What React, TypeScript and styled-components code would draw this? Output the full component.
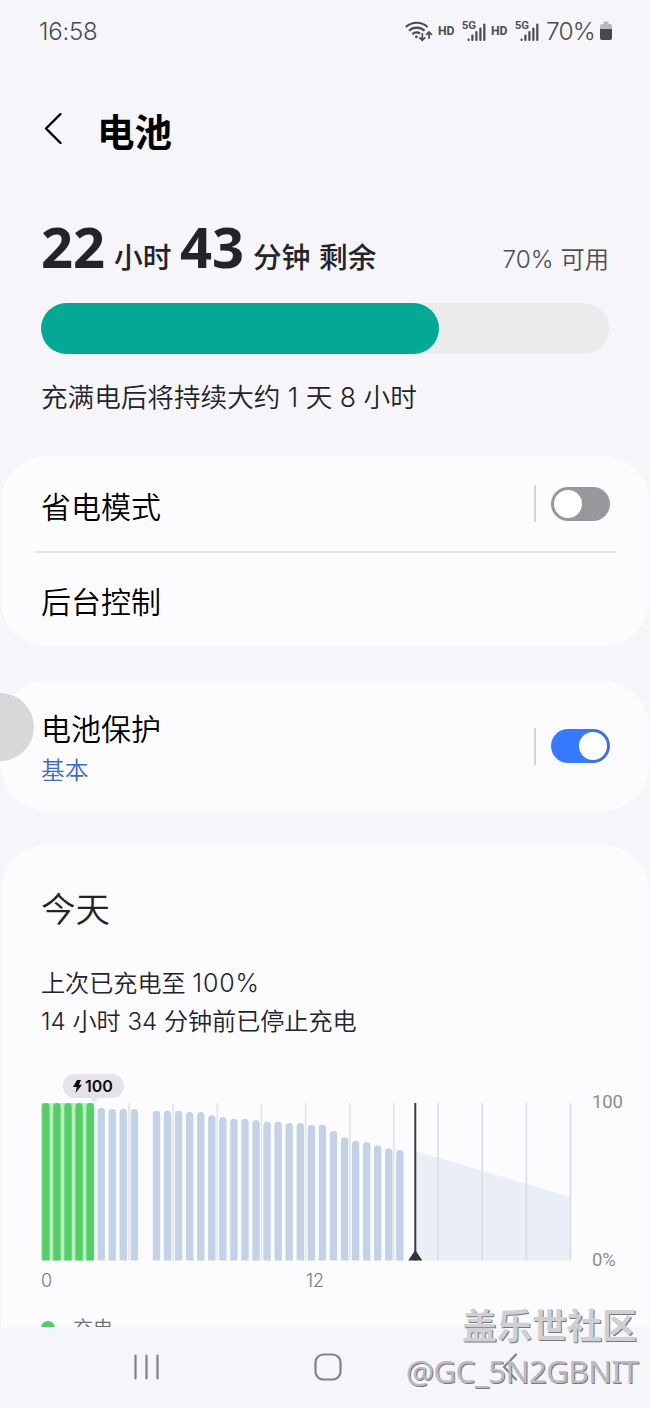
import React from "react";
import styled, { createGlobalStyle } from "styled-components";

const GlobalStyle = createGlobalStyle`
  *, *::before, *::after { box-sizing: border-box; }
  body {
    margin: 0;
    background: #f6f6fa;
    color: #000;
    font-family: Inter, "Noto Sans CJK SC", sans-serif;
  }
`;

const Screen = styled.div`
  position: relative;
  display: flex;
  flex-direction: column;
  width: 650px;
  height: 1408px;
  overflow: hidden;
  background: #f6f6fa;
  white-space: nowrap;
`;

const StatusBar = styled.header`
  display: flex;
  align-items: center;
  height: 62px;
  flex: none;
  padding: 0 37px 0 38px;
  color: #4b4b4f;
`;

const Clock = styled.span`
  padding: 1px 0 0 1px;
  font-size: 24px;
  font-weight: 350;
  line-height: 30px;
  letter-spacing: -0.2px;
  margin-right: auto;
`;

const StatusIcons = styled.div`
  display: flex;
  align-items: center;
`;

const HdLabel = styled.span`
  width: 17px;
  margin: 0 7px 0 5px;
  font: 700 12.2px/14px Roboto, sans-serif;
`;

const Percent = styled.span`
  width: 50px;
  margin: 0 3px 0 7px;
  font-size: 24.5px;
  font-weight: 350;
  line-height: 30px;
  letter-spacing: -0.9px;
`;

const Header = styled.div`
  display: flex;
  align-items: center;
  height: 136px;
  flex: none;
  padding-left: 44px;
  gap: 34px;
`;

const Title = styled.h1`
  margin: 0;
  font: 700 37.5px/44px "Noto Sans CJK SC", sans-serif;
`;

const Summary = styled.section`
  padding: 20px 41px 0;
  height: 258px;
  flex: none;
  color: #232329;
`;

const RemainingRow = styled.div`
  display: flex;
  align-items: baseline;
  height: 56px;
  line-height: 56px;
`;

const BigNumber = styled.span<{ $width: number }>`
  width: ${(p) => p.$width}px;
  font-family: "Noto Sans", sans-serif;
  font-weight: 700;
  font-size: 56px;
`;

const Unit = styled.span<{ $width: number }>`
  width: ${(p) => p.$width}px;
  font-family: "Noto Sans CJK SC", sans-serif;
  font-weight: 500;
  font-size: 28.7px;
`;

const Available = styled.span`
  margin-left: auto;
  font-size: 24.3px;
  font-weight: 350;
  color: #4d4d52;
`;

const Track = styled.div`
  height: 51px;
  margin-top: 29px;
  border-radius: 26px;
  background: #ebebee;
`;

const Fill = styled.div`
  width: 70%;
  height: 100%;
  border-radius: 26px;
  background: #03a994;
`;

const Estimate = styled.p`
  margin: 23px 0 0;
  font-size: 26.6px;
  font-weight: 350;
  line-height: 40px;
`;

const Card = styled.section<{ $height: number; $gap?: number }>`
  height: ${(p) => p.$height}px;
  margin: ${(p) => p.$gap ?? 0}px 1px 0;
  flex: none;
  border-radius: 46px;
  background: #fcfcff;
`;

const SettingRow = styled.div<{ $height: number }>`
  display: flex;
  align-items: center;
  height: ${(p) => p.$height}px;
  padding: 0 39px 0 40px;
`;

const Divider = styled.hr`
  height: 2px;
  margin: 0 33px;
  border: 0;
  background: #e4e4e9;
`;

const Labels = styled.div`
  margin-right: auto;
  padding-top: 2px;
  font-family: "Noto Sans CJK SC", sans-serif;
  font-weight: 350;
`;

const Name = styled.div`
  font-size: 30px;
  line-height: 44px;
`;

const Sub = styled.div`
  font-size: 23.8px;
  line-height: 40px;
  color: #3d6dbd;
`;

const Switch = styled.div<{ $on?: boolean }>`
  display: flex;
  justify-content: ${(p) => (p.$on ? "flex-end" : "flex-start")};
  width: 59px;
  height: 34px;
  padding: 3px;
  border-radius: 17px;
  background: ${(p) => (p.$on ? "linear-gradient(90deg, #387aff 60%, #416fd0 85%)" : "#98979c")};

  &::after {
    content: "";
    width: 28px;
    height: 28px;
    border-radius: 50%;
    background: #fff;
  }
`;

const Separator = styled.div`
  width: 2px;
  height: 37px;
  margin-right: 15px;
  background: #d5d5d9;
`;

const UsageCard = styled.section`
  flex: 1;
  min-height: 0;
  overflow: hidden;
  margin: 34px 1px 0;
  padding: 38px 0 0 40px;
  border-radius: 46px 46px 0 0;
  background: #fcfcff;
  color: #232329;
`;

const Today = styled.h2`
  margin: 0 0 34px;
  font: 350 34.5px/48px "Noto Sans CJK SC", sans-serif;
`;

const UsageText = styled.p`
  height: 38px;
  margin: 0;
  font-size: 24.1px;
  font-weight: 350;
  line-height: 38px;
`;

const Level = styled.span`
  font-size: 25px;
  line-height: 1;
  letter-spacing: 0.8px;
`;

const ChargeBadge = styled.div`
  position: relative;
  display: flex;
  align-items: center;
  gap: 3px;
  width: 61px;
  height: 24px;
  margin: 33px 0 5px 22px;
  padding-left: 10px;
  border-radius: 12px;
  background: #e4e4e8;
  color: #0c0c0f;
  font-size: 16px;
  font-weight: 600;

  &::after {
    content: "";
    position: absolute;
    left: 27px;
    top: 24px;
    border: 4px solid transparent;
    border-top-color: #e4e4e8;
    border-bottom: 0;
  }
`;

const ChartRow = styled.div`
  display: flex;
  height: 158px;
`;

const YAxis = styled.div`
  display: flex;
  flex-direction: column;
  justify-content: space-between;
  margin: -12px 0 -10px 19px;
  font: 400 18.5px/22px Roboto, sans-serif;
  letter-spacing: -0.2px;
  color: #8b8b8f;
`;

const XAxis = styled.div`
  display: flex;
  margin-top: 8px;
  font-size: 18px;
  font-weight: 350;
  line-height: 24px;
  color: #77777b;
`;

const XTick = styled.span<{ $width: number }>`
  width: ${(p) => p.$width}px;
`;

const Legend = styled.div`
  display: flex;
  align-items: center;
  gap: 18px;
  height: 30px;
  margin-top: 20px;
  font: 350 20px/30px "Noto Sans CJK SC", sans-serif;
  color: #6d6d71;

  &::before {
    content: "";
    width: 14px;
    height: 14px;
    border-radius: 50%;
    background: #55cd68;
  }
`;

const NavBar = styled.nav`
  display: flex;
  align-items: center;
  height: 81px;
  flex: none;
  padding: 0 0 2px 133px;
  background: #f6f6fa;
`;

const NavIcon = styled.svg<{ $gap?: number }>`
  margin-left: ${(p) => p.$gap ?? 0}px;
  fill: none;
  stroke: #828286;
  stroke-width: 2.2;
  stroke-linecap: round;
`;

const EdgeHandle = styled.div`
  position: absolute;
  left: -34px;
  top: 693px;
  width: 68px;
  height: 68px;
  border-radius: 50%;
  background: #d8d8d8;
`;

const Watermark = styled.div`
  position: absolute;
  right: 12px;
  top: 1299px;
  text-align: right;
  color: #d0d0d3;
  text-shadow: 1px 1px 0 #77777c;
`;

const WatermarkName = styled.div`
  margin-right: 1px;
  font: 700 35px/50px "Noto Sans CJK SC", sans-serif;
`;

const WatermarkUser = styled.div`
  color: #bcbcc0;
  font: 400 31.5px/44px "Noto Sans", sans-serif;
  letter-spacing: -0.7px;
`;

function Wifi() {
  return (
    <svg width="28" height="24" viewBox="406 18 28 24" fill="none" stroke="#4b4b4f" strokeWidth="2.100">
      <path d="M406.800 26.100a16 16 0 0 1 21.800 0" />
      <path d="M410 29.700a11.400 11.400 0 0 1 15.600 0" />
      <path d="M413.300 33.100a6.600 6.600 0 0 1 7.800-.6" />
      <circle cx="417.400" cy="35.900" r="1.400" fill="#4b4b4f" stroke="none" />
      <path d="M423.300 32v7m-3-2.700 3 3 3-3M430 37.800v-6.500m-3 2.700 3-3 3 3" strokeWidth="1.700" />
    </svg>
  );
}

function Signal() {
  return (
    <svg width="24" height="24" viewBox="0 0 24 24">
      <text x="-0.300" y="10" fontFamily="Roboto, sans-serif" fontWeight="600" fontSize="11.500" fill="#4b4b4f">5G</text>
      <g fill="#4b4b4f">
        <rect x="5.500" y="19.500" width="2.200" height="2.500" rx="1" />
        <rect x="9.300" y="15.500" width="2.200" height="6.500" rx="1" />
        <rect x="13.300" y="12" width="2.200" height="10" rx="1" />
        <rect x="17.300" y="8.500" width="2.200" height="13.500" rx="1" />
        <rect x="21.200" y="4.500" width="2.200" height="17.500" rx="1" />
      </g>
    </svg>
  );
}

function Battery() {
  return (
    <svg width="14" height="20" viewBox="0 0 14 20">
      <path d="M4.500 1.500Q4.500.5 5.500.5h3q1 0 1 1V3h1.500q2 0 2 2v3H1V5q0-2 2-2h1.500z" fill="#b9b9bd" />
      <path d="M1 8h12v9q0 2-2 2H3q-2 0-2-2z" fill="#48484c" />
    </svg>
  );
}

const BASE = 157.5;
const PITCH = 11.06;
const tops: (number | null)[] = [
  0, 0, 0, 0, 0, 4.7, 6, 6, 6, null, 7.7, 7.7, 7.7, 9, 9, 12.3, 14, 15.7, 15.7,
  17, 18.7, 18.7, 20, 20, 21.7, 21.7, 28, 34.3, 37.7, 39, 42.3, 45.5, 47,
];
const gridLines = Array.from({ length: 13 }, (_, i) => -0.3 + i * 44.15);

function Chart() {
  return (
    <svg width="532" height="158" viewBox="0 0 532 158">
      <path d={`M375 48 529.500 94V${BASE}H375z`} fill="#e9eef7" />
      {gridLines.map((x, i) => (
        <rect key={i} x={x - 0.8} y="0" width="1.600" height={BASE} fill={x > 375 ? "#d9dce3" : "#e4e4e7"} />
      ))}
      <rect x="-0.500" y="0" width="54" height={BASE} fill="#b9efbd" />
      {tops.map((top, i) => {
        if (top === null) return null;
        const x = 1.2 + i * PITCH;
        return (
          <path
            key={i}
            d={`M${x} ${BASE}V${top + 3.7}a3.700 3.700 0 0 1 7.400 0V${BASE}z`}
            fill={i < 5 ? "#55cd68" : "#c3d2e6"}
          />
        );
      })}
      <rect x="373.300" y="0" width="2" height={BASE} fill="#3c3c40" />
      <path d="M374.300 147l7 10.500h-14z" fill="#353539" />
    </svg>
  );
}

export default function App() {
  return (
    <Screen>
      <GlobalStyle />
      <StatusBar>
        <Clock>16:58</Clock>
        <StatusIcons>
          <Wifi />
          <HdLabel>HD</HdLabel>
          <Signal />
          <HdLabel>HD</HdLabel>
          <Signal />
          <Percent>70%</Percent>
          <Battery />
        </StatusIcons>
      </StatusBar>
      <Header>
        <svg width="19" height="34" viewBox="0 0 19 34" fill="none" stroke="#000" strokeWidth="2.400" strokeLinecap="round" strokeLinejoin="round">
          <path d="M16.500 1 2 15.500l14.500 14.500" />
        </svg>
        <Title>电池</Title>
      </Header>

      <Summary>
        <RemainingRow>
          <BigNumber $width={73}>22</BigNumber>
          <Unit $width={66}>小时</Unit>
          <BigNumber $width={73}>43</BigNumber>
          <Unit $width={66}>分钟</Unit>
          <Unit $width={58}>剩余</Unit>
          <Available>70% 可用</Available>
        </RemainingRow>
        <Track>
          <Fill />
        </Track>
        <Estimate>充满电后将持续大约 1 天 8 小时</Estimate>
      </Summary>

      <Card $height={190}>
        <SettingRow $height={95}>
          <Labels>
            <Name>省电模式</Name>
          </Labels>
          <Separator />
          <Switch />
        </SettingRow>
        <Divider />
        <SettingRow $height={92}>
          <Labels>
            <Name>后台控制</Name>
          </Labels>
        </SettingRow>
      </Card>

      <Card $height={130} $gap={35}>
        <SettingRow $height={130}>
          <Labels>
            <Name>电池保护</Name>
            <Sub>基本</Sub>
          </Labels>
          <Separator />
          <Switch $on />
        </SettingRow>
      </Card>

      <UsageCard>
        <Today>今天</Today>
        <UsageText>
          上次已充电至 <Level>100%</Level>
        </UsageText>
        <UsageText>14 小时 34 分钟前已停止充电</UsageText>
        <ChargeBadge>
          <svg width="9" height="13" viewBox="0 0 9 13" fill="#0c0c0f">
            <path d="M4 0h4L6 4.700h3L2.500 13l1.300-6H0z" />
          </svg>
          100
        </ChargeBadge>
        <ChartRow>
          <Chart />
          <YAxis>
            <span>100</span>
            <span>0%</span>
          </YAxis>
        </ChartRow>
        <XAxis>
          <XTick $width={265}>0</XTick>
          <XTick $width={30}>12</XTick>
        </XAxis>
        <Legend>充电</Legend>
      </UsageCard>

      <NavBar>
        <NavIcon width="27" height="28" viewBox="0 0 27 28">
          <path d="M2.500 2.500v23M13.500 2.500v23M24.500 2.500v23" />
        </NavIcon>
        <NavIcon $gap={154} width="28" height="28" viewBox="0 0 28 28">
          <rect x="1.500" y="1.500" width="25" height="25" rx="8" />
        </NavIcon>
        <NavIcon $gap={160} width="16" height="28" viewBox="0 0 16 28">
          <path d="M14 1.500 2 14l12 12.500" />
        </NavIcon>
      </NavBar>

      <EdgeHandle />
      <Watermark>
        <WatermarkName>盖乐世社区</WatermarkName>
        <WatermarkUser>@GC_5N2GBNIT</WatermarkUser>
      </Watermark>
    </Screen>
  );
}
